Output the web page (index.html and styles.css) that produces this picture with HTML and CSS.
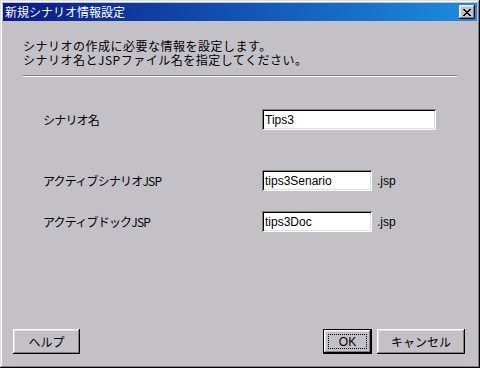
FILE: index.html
```html
<!DOCTYPE html>
<html lang="ja">
<head>
    <meta charset="UTF-8">
    <title>新規シナリオ情報設定</title>
    <link rel="stylesheet" href="styles.css">
</head>
<body>
    <div class="window">
        <div class="title-bar">
            <span class="title-text">新規シナリオ情報設定</span>
            <button class="close-button">
                <svg width="8" height="7" viewBox="0 0 8 7" shape-rendering="crispEdges">
                    <path fill="#000" d="M0 0h2v1H0zM6 0h2v1H6zM1 1h2v1H1zM5 1h2v1H5zM2 2h4v1H2zM3 3h2v1H3zM2 4h4v1H2zM1 5h2v1H1zM5 5h2v1H5zM0 6h2v1H0zM6 6h2v1H6z"/>
                </svg>
            </button>
        </div>

        <div class="content">
            <p class="intro">シナリオの作成に必要な情報を設定します。<br>シナリオ名とJSPファイル名を指定してください。</p>
            <div class="separator"></div>

            <div class="form-row first">
                <label class="field-label" for="scenarioName">シナリオ名</label>
                <input class="text-input wide" id="scenarioName" type="text" value="Tips3">
            </div>
            <div class="form-row second">
                <label class="field-label" for="activeScenario">アクティブシナリオJSP</label>
                <input class="text-input" id="activeScenario" type="text" value="tips3Senario">
                <span class="suffix">.jsp</span>
            </div>
            <div class="form-row third">
                <label class="field-label" for="activeDoc">アクティブドックJSP</label>
                <input class="text-input" id="activeDoc" type="text" value="tips3Doc">
                <span class="suffix">.jsp</span>
            </div>
        </div>

        <div class="button-bar">
            <button class="win-button help-button">ヘルプ</button>
            <div class="button-group">
                <button class="win-button ok-button"><span class="focus-ring">OK</span></button>
                <button class="win-button cancel-button">キャンセル</button>
            </div>
        </div>
    </div>
</body>
</html>
```

FILE: styles.css
```css
* {
    margin: 0;
    padding: 0;
    box-sizing: border-box;
}

body {
    background: #c3c1c6;
    font-family: "Noto Sans CJK JP", "Liberation Sans", sans-serif;
    font-size: 12px;
    color: #000;
}

.window {
    width: 480px;
    height: 368px;
    display: flex;
    flex-direction: column;
    padding: 3px;
    background: #c3c1c6;
    box-shadow: inset -1px -1px #000, inset 1px 1px #dfdfdf,
                inset -2px -2px #808080, inset 2px 2px #fff;
}

.title-bar {
    height: 18px;
    display: flex;
    align-items: center;
    justify-content: space-between;
    padding: 0 2px 0 2px;
    background: linear-gradient(to right, #0a1a88, #1a8ede);
}

.title-text {
    color: #fff;
    font-size: 12px;
    line-height: 18px;
}

.close-button {
    width: 16px;
    height: 14px;
    display: flex;
    align-items: center;
    justify-content: center;
    border: none;
    background: #c3c1c6;
    box-shadow: inset -1px -1px #000, inset 1px 1px #fff,
                inset -2px -2px #808080, inset 2px 2px #dfdfdf;
}

.content {
    flex: 1;
    padding: 18px 20px 0 20px;
}

.intro {
    line-height: 14px;
    letter-spacing: 0.5px;
}

.separator {
    margin-top: 8px;
    height: 2px;
    border-top: 1px solid #808080;
    border-bottom: 1px solid #fff;
}

.form-row {
    display: flex;
    align-items: center;
}

.form-row.first {
    margin-top: 32px;
}

.form-row.second {
    margin-top: 40px;
}

.form-row.third {
    margin-top: 20px;
}

.field-label {
    width: 239px;
    padding-left: 20px;
    letter-spacing: -0.8px;
}

.text-input {
    width: 110px;
    height: 21px;
    padding: 0 3px;
    border: none;
    outline: none;
    background: #fff;
    font-family: "Liberation Sans", sans-serif;
    font-size: 12px;
    color: #000;
    box-shadow: inset 1px 1px #808080, inset -1px -1px #fff,
                inset 2px 2px #000, inset -2px -2px #dfdfdf;
}

.text-input.wide {
    width: 174px;
}

.suffix {
    margin-left: 5px;
    font-family: "Liberation Sans", sans-serif;
}

.button-bar {
    display: flex;
    justify-content: space-between;
    padding: 0 12px 11px 10px;
}

.button-group {
    display: flex;
    gap: 5px;
}

.win-button {
    height: 25px;
    display: flex;
    align-items: center;
    justify-content: center;
    border: none;
    background: #c3c1c6;
    font-family: "Noto Sans CJK JP", "Liberation Sans", sans-serif;
    font-size: 12px;
    color: #000;
    box-shadow: inset -1px -1px #000, inset 1px 1px #fff,
                inset -2px -2px #808080, inset 2px 2px #dfdfdf;
}

.help-button {
    width: 67px;
}

.ok-button {
    width: 49px;
    padding: 4px;
    border: 1px solid #000;
}

.focus-ring {
    width: 100%;
    height: 100%;
    display: flex;
    align-items: center;
    justify-content: center;
    border: 1px dotted #000;
    font-family: "Liberation Sans", sans-serif;
}

.cancel-button {
    width: 88px;
}
```
